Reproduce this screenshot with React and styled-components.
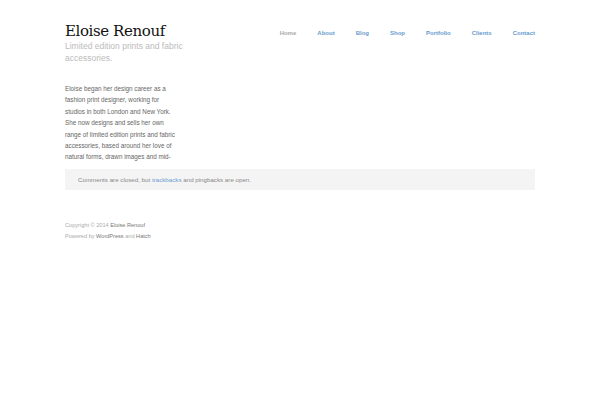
import React from "react";
import styled, { createGlobalStyle } from "styled-components";

const GlobalStyle = createGlobalStyle`
    html, body {
        margin: 0;
        padding: 0;
        background: #ffffff;
    }
    body {
        font-family: "Liberation Sans", Arial, sans-serif;
        color: #777777;
    }
    a {
        text-decoration: none;
    }
`;

const Page = styled.div`
    width: 470px;
    margin: 0 auto;
    padding-top: 22px;
`;

const Header = styled.header`
    display: flex;
    justify-content: space-between;
    align-items: flex-start;
`;

const Branding = styled.div`
    width: 130px;
`;

const SiteTitle = styled.h1`
    margin: 0;
    font-family: "DejaVu Serif", "Liberation Serif", serif;
    font-weight: 400;
    font-size: 15px;
    line-height: 18px;
    color: #111111;
    letter-spacing: -0.4px;
`;

const Tagline = styled.p`
    margin: 0;
    font-size: 8.5px;
    line-height: 12px;
    color: #bbbbbb;
`;

const Nav = styled.nav`
    display: flex;
    gap: 21px;
    padding-top: 8px;
`;

const NavLink = styled.a`
    font-size: 6px;
    font-weight: 700;
    color: ${(p) => (p.$active ? "#aaaaaa" : "#6a9bcf")};
`;

const Entry = styled.div`
    margin-top: 19px;
    width: 112px;
    font-size: 6.3px;
    line-height: 11.4px;
    color: #666666;
`;

const CommentsBox = styled.div`
    margin-top: 6px;
    background: #f4f4f4;
    padding: 0 13px;
    height: 21px;
    display: flex;
    align-items: center;
    font-size: 6.2px;
    color: #888888;
`;

const InlineLink = styled.a`
    color: ${(p) => (p.$muted ? "#777777" : "#6a9bcf")};
`;

const Footer = styled.footer`
    margin-top: 30px;
    font-size: 5.6px;
    line-height: 11px;
    color: #aaaaaa;
`;

const navItems = ["Home", "About", "Blog", "Shop", "Portfolio", "Clients", "Contact"];

export default function App() {
    return (
        <>
            <GlobalStyle />
            <Page>
                <Header>
                    <Branding>
                        <SiteTitle>Eloise Renouf</SiteTitle>
                        <Tagline>Limited edition prints and fabric accessories.</Tagline>
                    </Branding>
                    <Nav>
                        {navItems.map((item, i) => (
                            <NavLink key={item} href="#" $active={i === 0}>
                                {item}
                            </NavLink>
                        ))}
                    </Nav>
                </Header>
                <Entry>
                    Eloise began her design career as a fashion print designer, working for
                    studios in both London and New York. She now designs and sells her own
                    range of limited edition prints and fabric accessories, based around her
                    love of natural forms, drawn images and mid-
                </Entry>
                <CommentsBox>
                    <span>
                        Comments are closed, but <InlineLink href="#">trackbacks</InlineLink> and
                        pingbacks are open.
                    </span>
                </CommentsBox>
                <Footer>
                    <div>
                        Copyright © 2014 <InlineLink href="#" $muted>Eloise Renouf</InlineLink>
                    </div>
                    <div>
                        Powered by <InlineLink href="#" $muted>WordPress</InlineLink> and{" "}
                        <InlineLink href="#" $muted>Hatch</InlineLink>
                    </div>
                </Footer>
            </Page>
        </>
    );
}
